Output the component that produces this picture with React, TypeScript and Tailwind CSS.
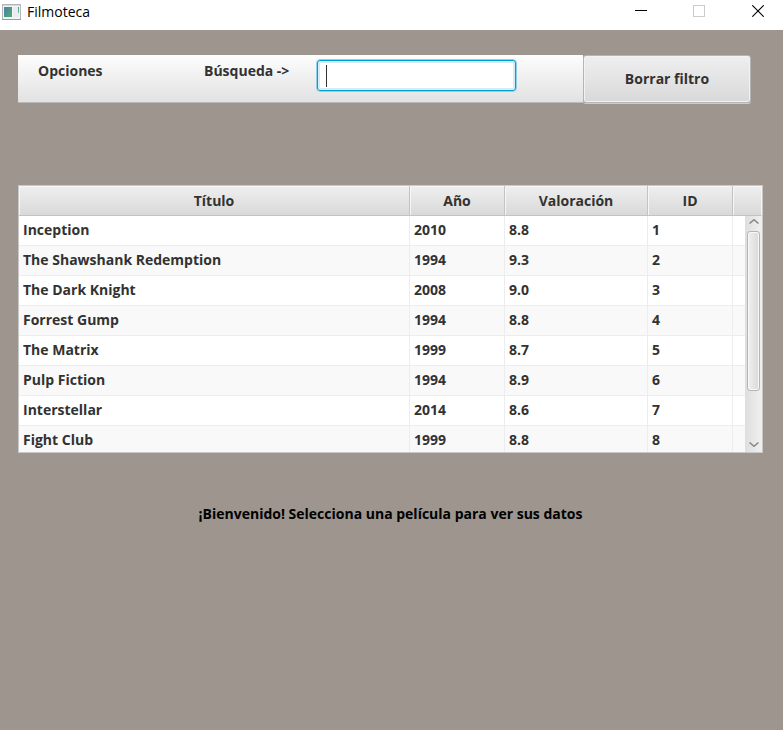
import { useState } from "react";

type Film = { id: number; title: string; year: number; rating: string };

const films: Film[] = [
  { id: 1, title: "Inception", year: 2010, rating: "8.8" },
  { id: 2, title: "The Shawshank Redemption", year: 1994, rating: "9.3" },
  { id: 3, title: "The Dark Knight", year: 2008, rating: "9.0" },
  { id: 4, title: "Forrest Gump", year: 1994, rating: "8.8" },
  { id: 5, title: "The Matrix", year: 1999, rating: "8.7" },
  { id: 6, title: "Pulp Fiction", year: 1994, rating: "8.9" },
  { id: 7, title: "Interstellar", year: 2014, rating: "8.6" },
  { id: 8, title: "Fight Club", year: 1999, rating: "8.8" },
];

function AppIcon() {
  return (
    <svg width="19" height="16" viewBox="0 0 19 16" aria-hidden="true">
      <defs>
        <linearGradient id="pane" x1="0" y1="0" x2="1" y2="1">
          <stop offset="0" stopColor="#4a7fa8" />
          <stop offset="1" stopColor="#4fae6c" />
        </linearGradient>
        <linearGradient id="side" x1="0" y1="0" x2="0" y2="1">
          <stop offset="0" stopColor="#4a8fa8" />
          <stop offset="1" stopColor="#6cc08c" />
        </linearGradient>
      </defs>
      <rect x="0.5" y="0.5" width="18" height="15" fill="#f3f4f5" stroke="#b4b6b8" />
      <path d="M1 1.5h17" stroke="#d5d7d9" />
      <path d="M0 15.5h19" stroke="#9a9c9e" />
      <rect x="2" y="3" width="8" height="10" fill="url(#pane)" />
      <rect x="11" y="3" width="6" height="10" fill="#e9edef" />
      <rect x="16" y="3" width="1" height="6" fill="url(#side)" />
    </svg>
  );
}

function TitleBar() {
  return (
    <header className="flex h-[30px] items-start bg-white text-black">
      <div className="flex items-center gap-1.5 pt-0.5 pl-0.5">
        <AppIcon />
        <h1 className="text-[14px] leading-5 font-normal">Filmoteca</h1>
      </div>
      <div className="ml-auto flex">
        <button type="button" aria-label="Minimizar" className="flex h-[22px] w-[58px] items-center justify-center">
          <svg width="12" height="12" viewBox="0 0 12 12"><path d="M0 5.5h12" stroke="#000" /></svg>
        </button>
        <button type="button" aria-label="Maximizar" disabled className="flex h-[22px] w-[58px] items-center justify-center">
          <svg width="12" height="12" viewBox="0 0 12 12"><rect x="0.5" y="0.5" width="11" height="11" fill="none" stroke="#ccc" /></svg>
        </button>
        <button type="button" aria-label="Cerrar" className="flex h-[22px] w-[55px] items-center justify-center pl-1">
          <svg width="12" height="12" viewBox="0 0 12 12"><path d="M0.3 0.3l11.4 11.4M11.7 0.3L0.3 11.7" stroke="#000" strokeWidth="1.1" /></svg>
        </button>
      </div>
    </header>
  );
}

const headCell =
  "border-r border-b border-[#c3c3c3] bg-linear-to-b from-[#efefef] to-[#d9d9d9] p-0 text-center font-bold shadow-[inset_1px_1px_0_#f6f6f6] last:border-r-[#f6f6f6]";
const bodyCell = "border-r border-b border-[#ededed] pt-0 pr-0 pb-0.5 pl-1 align-middle";

function ScrollBar() {
  return (
    <div className="absolute top-[30px] right-0 bottom-0 flex w-[17px] flex-col items-center bg-linear-to-r from-[#dedede] to-[#f0f0f0]">
      <button type="button" aria-label="Subir" className="flex h-[15px] w-full items-center justify-center pb-1">
        <svg width="10" height="5" viewBox="0 0 10 5"><path d="M0.5 4.5L5 0.7l4.5 3.8" fill="none" stroke="#858585" strokeWidth="1.4" /></svg>
      </button>
      <div className="h-[160px] w-[13px] rounded-[3px] border border-[#b5b5b5] bg-linear-to-r from-[#efefef] to-[#dadada] shadow-[inset_0_0_0_1px_#f8f8f8]" />
      <button type="button" aria-label="Bajar" className="mt-auto flex h-[15px] w-full items-center justify-center">
        <svg width="10" height="5" viewBox="0 0 10 5"><path d="M0.5 0.5L5 4.3l4.5-3.8" fill="none" stroke="#858585" strokeWidth="1.4" /></svg>
      </button>
    </div>
  );
}

function FilmTable({ rows }: { rows: Film[] }) {
  return (
    <div className="relative mr-5 h-[268px] overflow-hidden border border-[#c8c8c8] bg-white">
      <table className="w-full table-fixed border-separate border-spacing-0">
        <colgroup>
          <col />
          <col className="w-[95px]" />
          <col className="w-[143px]" />
          <col className="w-[85px]" />
          <col className="w-[29px]" />
        </colgroup>
        <thead>
          <tr className="h-[30px]">
            <th className={headCell}>Título</th>
            <th className={headCell}>Año</th>
            <th className={headCell}>Valoración</th>
            <th className={headCell}>ID</th>
            <td className={headCell} />
          </tr>
        </thead>
        <tbody>
          {rows.map((film) => (
            <tr key={film.id} className="h-[30px] bg-white even:bg-[#f9f9f9]">
              <td className={bodyCell}>{film.title}</td>
              <td className={bodyCell}>{film.year}</td>
              <td className={bodyCell}>{film.rating}</td>
              <td className={bodyCell}>{film.id}</td>
              <td className={bodyCell} />
            </tr>
          ))}
        </tbody>
      </table>
      <ScrollBar />
    </div>
  );
}

export default function App() {
  const [query, setQuery] = useState("");
  const rows = films.filter((film) => film.title.toLowerCase().includes(query.toLowerCase()));

  return (
    <div className="flex min-h-screen flex-col bg-[#9d958e] font-['Open_Sans','Noto_Sans',sans-serif] text-[14px] leading-5 text-[#323232]">
      <TitleBar />
      <main className="flex flex-col pt-[25px] pl-[18px] font-bold">
        <div className="mr-8 flex h-12 items-start">
          <div className="flex h-12 flex-1 items-start border-b border-[#b9b9b9] bg-linear-to-b from-[#fdfdfd] to-[#e2e2e2] pl-5">
            <button type="button" className="mt-1.5 w-[166px] text-left">Opciones</button>
            <label htmlFor="search" className="mt-1.5 w-[112px]">Búsqueda -&gt;</label>
            <div className="relative mt-1">
              <input
                id="search"
                type="text"
                value={query}
                onChange={(event) => setQuery(event.target.value)}
                className="peer block h-[33px] w-[201px] rounded-[4px] border border-[#8fd0e8] bg-white px-2 font-normal shadow-[inset_0_0_0_1px_#039ed3,inset_0_0_0_3px_#d5edf6] outline-none"
              />
              <span className="absolute top-1.5 left-2.5 h-[22px] w-px bg-[#323232] peer-focus:hidden" />
            </div>
          </div>
          <button
            type="button"
            onClick={() => setQuery("")}
            className="h-12 w-[168px] rounded-[3px] border border-[#b5b5b5] bg-linear-to-b from-[#efefef] to-[#d9d9d9] shadow-[inset_0_0_0_1px_#f2f2f2,0_1px_0_#cfcdcb]"
          >
            Borrar filtro
          </button>
        </div>
        <div className="mt-[82px]">
          <FilmTable rows={rows} />
        </div>
        <p className="mt-[51px] mr-5 text-center text-black">
          ¡Bienvenido! Selecciona una película para ver sus datos
        </p>
      </main>
    </div>
  );
}
